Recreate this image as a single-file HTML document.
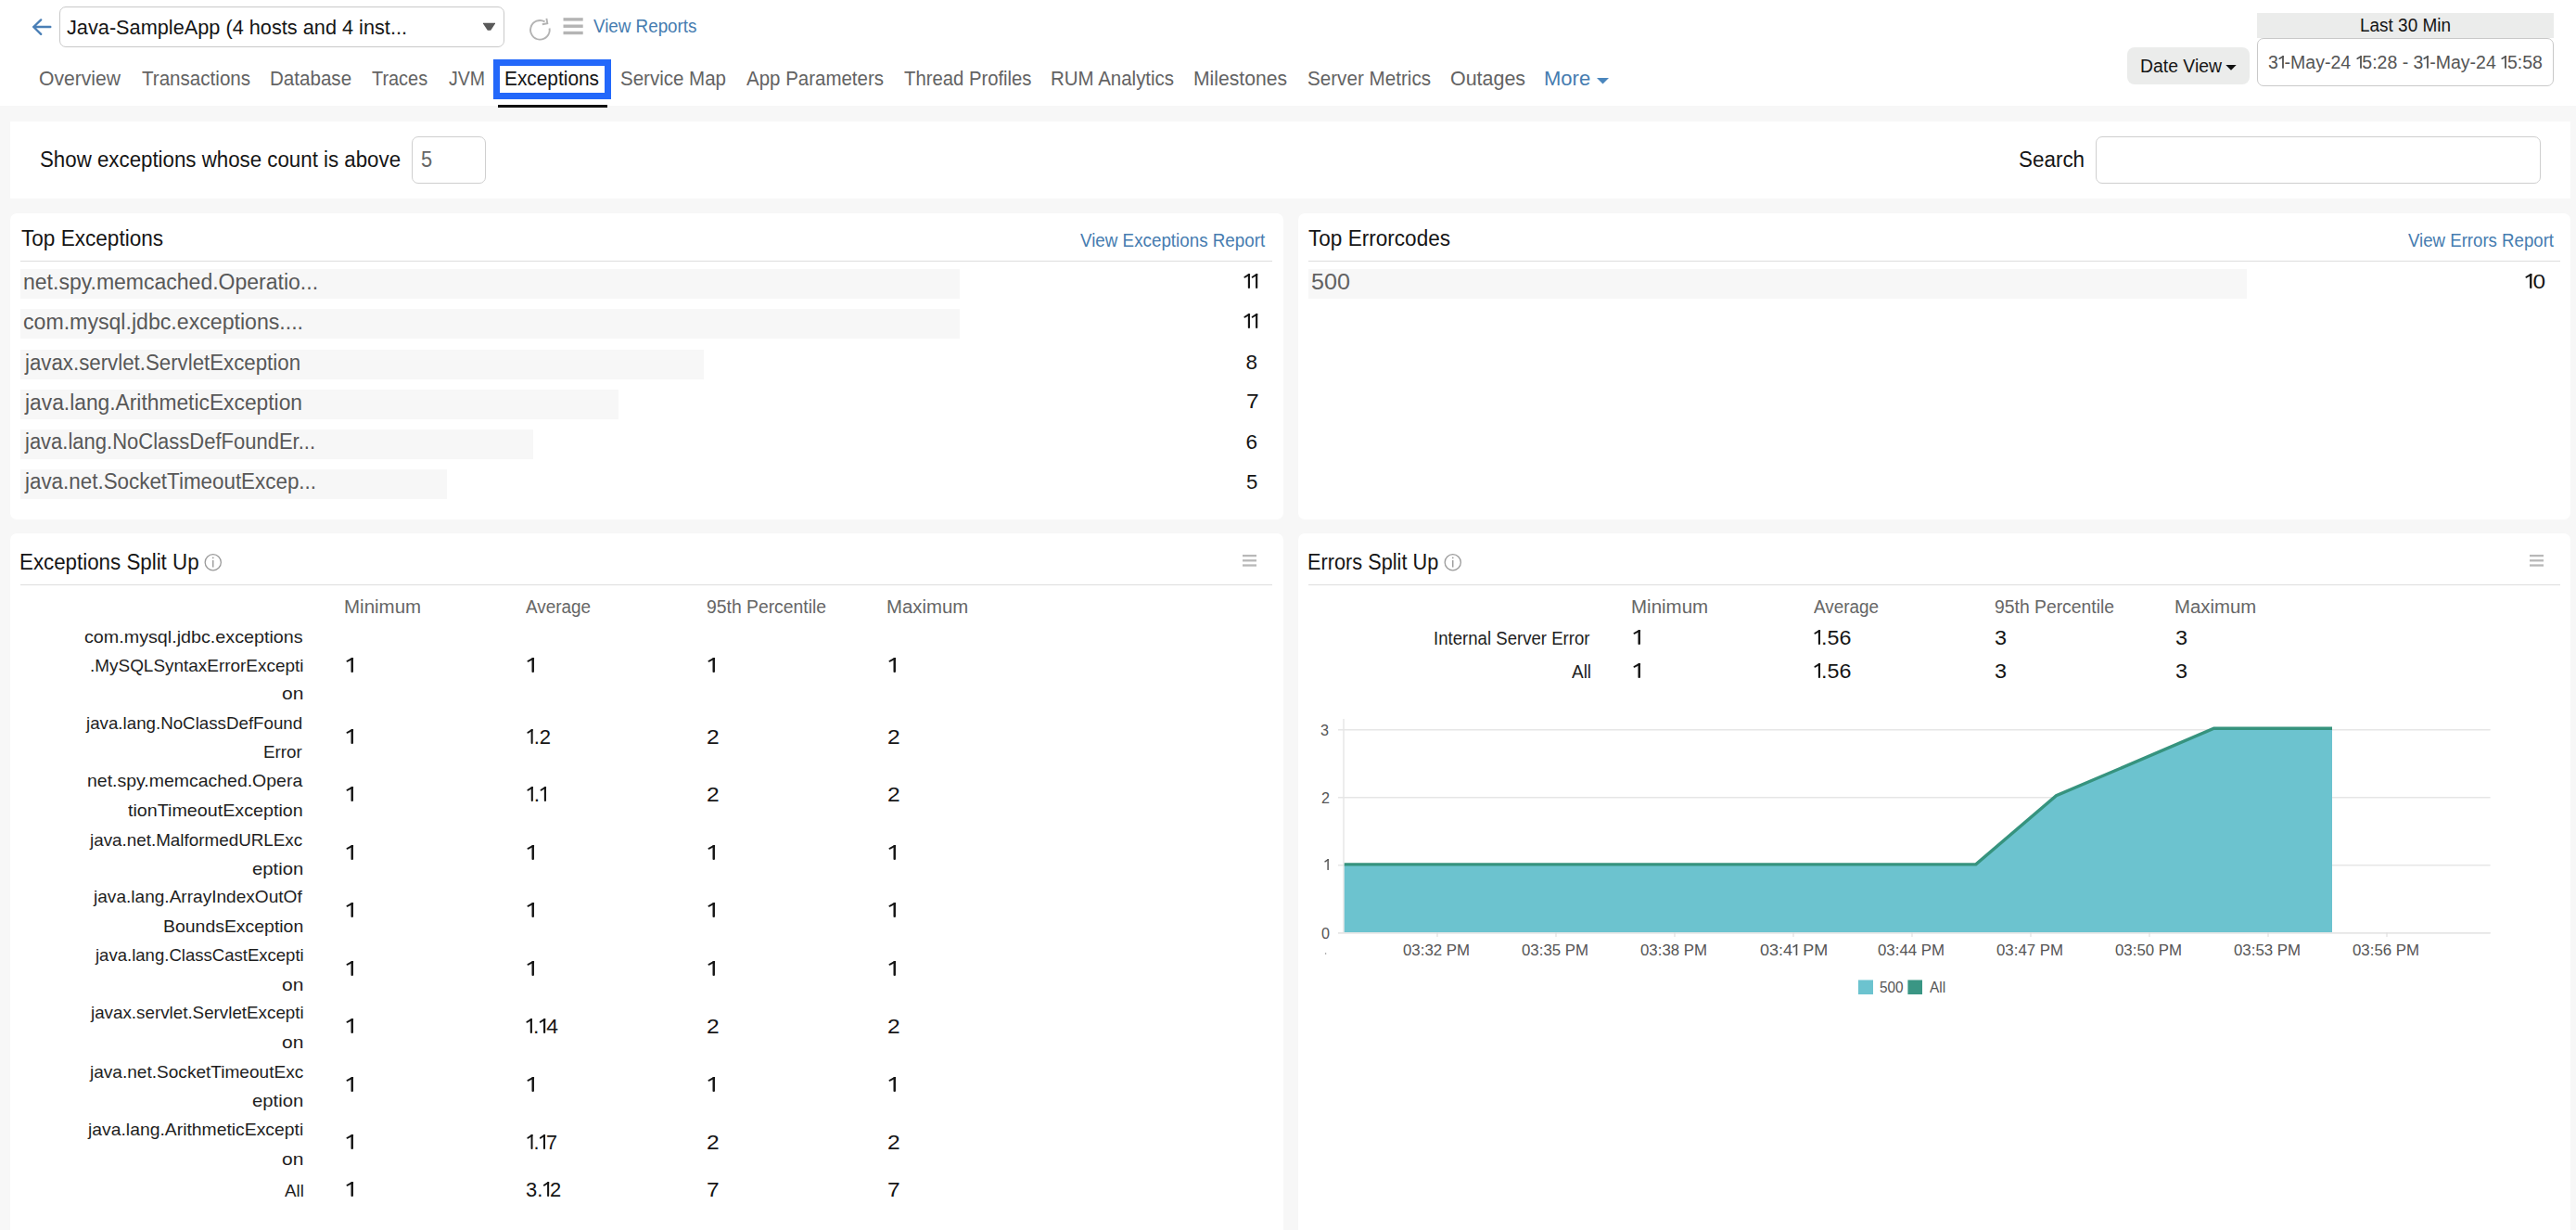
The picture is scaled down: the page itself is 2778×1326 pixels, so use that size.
<!DOCTYPE html>
<html><head><meta charset="utf-8"><title>Exceptions</title>
<style>
html,body{margin:0;padding:0;}
body{width:2778px;height:1326px;position:relative;overflow:hidden;background:#f7f7f7;font-family:"Liberation Sans",sans-serif;}
.t{position:absolute;white-space:pre;line-height:1;transform-origin:0 0;}
.one{position:static;display:inline-block;width:0.347em;height:0.711em;vertical-align:baseline;}
svg{position:absolute;left:0;top:0;}
</style></head><body>
<div style="position:absolute;left:0;top:0;width:2778px;height:114px;background:#fff"></div>
<div style="position:absolute;left:64px;top:7px;width:480px;height:44px;box-sizing:border-box;border:1px solid #c9c9c9;border-radius:7px;background:#fff"></div>
<div style="position:absolute;left:532px;top:64px;width:127px;height:43px;box-sizing:border-box;border:7px solid #2368fa"></div>
<div style="position:absolute;left:537px;top:113px;width:118px;height:3px;background:#111"></div>
<div style="position:absolute;left:2434px;top:14px;width:320px;height:27px;background:#ebeceb"></div>
<div style="position:absolute;left:2434px;top:41px;width:320px;height:52px;box-sizing:border-box;border:1px solid #c9c9c9;border-radius:7px;background:#fff"></div>
<div style="position:absolute;left:2294px;top:51px;width:132px;height:40px;background:#ebeceb;border-radius:8px"></div>
<div style="position:absolute;left:11px;top:131px;width:2761px;height:83px;background:#fff"></div>
<div style="position:absolute;left:444px;top:147px;width:80px;height:51px;box-sizing:border-box;border:1px solid #cfcfcf;border-radius:7px;background:#fff"></div>
<div style="position:absolute;left:2260px;top:147px;width:480px;height:51px;box-sizing:border-box;border:1px solid #cfcfcf;border-radius:7px;background:#fff"></div>
<div style="position:absolute;left:11px;top:230px;width:1373px;height:330px;background:#fff;border-radius:7px"></div>
<div style="position:absolute;left:22px;top:280.5px;width:1350px;height:1px;background:#dedede"></div>
<div style="position:absolute;left:22px;top:290px;width:1013px;height:32px;background:#f7f7f7"></div>
<div style="position:absolute;left:22px;top:333px;width:1013px;height:32px;background:#f7f7f7"></div>
<div style="position:absolute;left:22px;top:377px;width:737px;height:32px;background:#f7f7f7"></div>
<div style="position:absolute;left:22px;top:420px;width:645px;height:32px;background:#f7f7f7"></div>
<div style="position:absolute;left:22px;top:463px;width:553px;height:32px;background:#f7f7f7"></div>
<div style="position:absolute;left:22px;top:506px;width:460px;height:32px;background:#f7f7f7"></div>
<div style="position:absolute;left:1400px;top:230px;width:1372px;height:330px;background:#fff;border-radius:7px"></div>
<div style="position:absolute;left:1411px;top:280.5px;width:1350px;height:1px;background:#dedede"></div>
<div style="position:absolute;left:1411px;top:290px;width:1012px;height:32px;background:#f7f7f7"></div>
<div style="position:absolute;left:11px;top:575px;width:1373px;height:800px;background:#fff;border-radius:7px"></div>
<div style="position:absolute;left:22px;top:630px;width:1350px;height:1px;background:#dedede"></div>
<div style="position:absolute;left:1400px;top:575px;width:1372px;height:800px;background:#fff;border-radius:7px"></div>
<div style="position:absolute;left:1411px;top:630px;width:1350px;height:1px;background:#dedede"></div>
<svg width="2778" height="1326" viewBox="0 0 2778 1326">
<path d="M36.2 29 H54.3 M44.2 21.4 L36.2 29 L44.2 36.8" fill="none" stroke="#4a7fb6" stroke-width="2.4" stroke-linecap="round" stroke-linejoin="round"/>
<path d="M521 24.8 H534 V25.6 L529.2 32.8 H525.8 L521 25.6 Z" fill="#595959"/>
<path d="M592.54 30.51 A10.3 10.3 0 1 1 587.55 23.38" fill="none" stroke="#b3b3b3" stroke-width="1.9"/>
<path d="M584.8 26.3 L590.3 25.2 L589.4 19.8" fill="none" stroke="#b3b3b3" stroke-width="1.9"/>
<line x1="607.5" y1="20.9" x2="628.7" y2="20.9" stroke="#b4b4b4" stroke-width="3.4"/>
<line x1="607.5" y1="28.2" x2="628.7" y2="28.2" stroke="#b4b4b4" stroke-width="3.4"/>
<line x1="607.5" y1="35.5" x2="628.7" y2="35.5" stroke="#b4b4b4" stroke-width="3.4"/>
<path d="M1722 84 H1735 L1728.5 90.5 Z" fill="#4a86bd"/>
<path d="M2400.3 70 H2411.7 L2406 75.8 Z" fill="#111"/>
<circle cx="229.75" cy="606.25" r="8.6" fill="none" stroke="#9a9a9a" stroke-width="1.3"/>
<line x1="229.75" y1="604" x2="229.75" y2="611.5" stroke="#9a9a9a" stroke-width="1.4"/>
<circle cx="229.75" cy="601.3" r="0.9" fill="#9a9a9a"/>
<line x1="1340" y1="599.1" x2="1355" y2="599.1" stroke="#b8b8b8" stroke-width="2.3"/>
<line x1="1340" y1="604.3" x2="1355" y2="604.3" stroke="#b8b8b8" stroke-width="2.3"/>
<line x1="1340" y1="609.5" x2="1355" y2="609.5" stroke="#b8b8b8" stroke-width="2.3"/>
<circle cx="1566.75" cy="606.25" r="8.6" fill="none" stroke="#9a9a9a" stroke-width="1.3"/>
<line x1="1566.75" y1="604" x2="1566.75" y2="611.5" stroke="#9a9a9a" stroke-width="1.4"/>
<circle cx="1566.75" cy="601.3" r="0.9" fill="#9a9a9a"/>
<line x1="2728" y1="599.1" x2="2743" y2="599.1" stroke="#b8b8b8" stroke-width="2.3"/>
<line x1="2728" y1="604.3" x2="2743" y2="604.3" stroke="#b8b8b8" stroke-width="2.3"/>
<line x1="2728" y1="609.5" x2="2743" y2="609.5" stroke="#b8b8b8" stroke-width="2.3"/>
<line x1="1443" y1="786.8" x2="2685.6" y2="786.8" stroke="#e6e6e6" stroke-width="1.4"/>
<line x1="1443" y1="859.8" x2="2685.6" y2="859.8" stroke="#e6e6e6" stroke-width="1.4"/>
<line x1="1443" y1="932.7" x2="2685.6" y2="932.7" stroke="#e6e6e6" stroke-width="1.4"/>
<line x1="1443" y1="1005.8" x2="2685.6" y2="1005.8" stroke="#e6e6e6" stroke-width="1.4"/>
<line x1="1449" y1="775" x2="1449" y2="1005" stroke="#e6e6e6" stroke-width="1.4"/>
<path d="M1449.75 1005.1 L1449.75 932.4 L2130.8 932.4 L2217.5 858.3 L2387.5 785.8 L2515 785.8 L2515 1005.1 Z" fill="#6cc3cf"/>
<line x1="1443" y1="1005.8" x2="2685.6" y2="1005.8" stroke="#e6e6e6" stroke-width="1.4"/>
<path d="M1449.75 931.9 L2130.8 931.9 L2217.5 857.8 L2387.5 785.3 L2515 785.3" fill="none" stroke="#36937e" stroke-width="3.4"/>
<line x1="1550" y1="1005" x2="1550" y2="1010" stroke="#e0e0e0" stroke-width="1.2"/>
<line x1="1678" y1="1005" x2="1678" y2="1010" stroke="#e0e0e0" stroke-width="1.2"/>
<line x1="1806" y1="1005" x2="1806" y2="1010" stroke="#e0e0e0" stroke-width="1.2"/>
<line x1="1934" y1="1005" x2="1934" y2="1010" stroke="#e0e0e0" stroke-width="1.2"/>
<line x1="2062" y1="1005" x2="2062" y2="1010" stroke="#e0e0e0" stroke-width="1.2"/>
<line x1="2190" y1="1005" x2="2190" y2="1010" stroke="#e0e0e0" stroke-width="1.2"/>
<line x1="2318" y1="1005" x2="2318" y2="1010" stroke="#e0e0e0" stroke-width="1.2"/>
<line x1="2446" y1="1005" x2="2446" y2="1010" stroke="#e0e0e0" stroke-width="1.2"/>
<line x1="2574" y1="1005" x2="2574" y2="1010" stroke="#e0e0e0" stroke-width="1.2"/>
<circle cx="1429.6" cy="1028" r="0.8" fill="#888"/>
<rect x="2004" y="1056.5" width="16" height="15.5" fill="#6cc3cf"/>
<rect x="2057.4" y="1056.5" width="15.6" height="15.5" fill="#3a9684"/>
</svg>
<div class="t" id="t0" style="left:72.00px;top:19.38px;font-size:22.5px;color:#151515;transform:scaleX(0.9653);">Java-SampleApp (4 hosts and 4 inst...</div>
<div class="t" id="t1" style="left:640.21px;top:19.32px;font-size:19.5px;color:#467cb0;transform:scaleX(0.9637);">View Reports</div>
<div class="t" id="t2" style="left:41.98px;top:73.78px;font-size:22.5px;color:#636363;transform:scaleX(0.9386);">Overview</div>
<div class="t" id="t3" style="left:153.00px;top:73.78px;font-size:22.5px;color:#636363;transform:scaleX(0.9148);">Transactions</div>
<div class="t" id="t4" style="left:290.91px;top:73.78px;font-size:22.5px;color:#636363;transform:scaleX(0.9146);">Database</div>
<div class="t" id="t5" style="left:401.00px;top:73.78px;font-size:22.5px;color:#636363;transform:scaleX(0.8845);">Traces</div>
<div class="t" id="t6" style="left:484.00px;top:73.78px;font-size:22.5px;color:#636363;transform:scaleX(0.8673);">JVM</div>
<div class="t" id="t7" style="left:544.49px;top:73.78px;font-size:22.5px;color:#151515;transform:scaleX(0.9269);">Exceptions</div>
<div class="t" id="t8" style="left:668.99px;top:73.78px;font-size:22.5px;color:#636363;transform:scaleX(0.9119);">Service Map</div>
<div class="t" id="t9" style="left:805.00px;top:73.78px;font-size:22.5px;color:#636363;transform:scaleX(0.9104);">App Parameters</div>
<div class="t" id="t10" style="left:975.00px;top:73.78px;font-size:22.5px;color:#636363;transform:scaleX(0.9013);">Thread Profiles</div>
<div class="t" id="t11" style="left:1132.97px;top:73.78px;font-size:22.5px;color:#636363;transform:scaleX(0.9097);">RUM Analytics</div>
<div class="t" id="t12" style="left:1286.96px;top:73.78px;font-size:22.5px;color:#636363;transform:scaleX(0.9395);">Milestones</div>
<div class="t" id="t13" style="left:1409.99px;top:73.78px;font-size:22.5px;color:#636363;transform:scaleX(0.9173);">Server Metrics</div>
<div class="t" id="t14" style="left:1563.97px;top:73.78px;font-size:22.5px;color:#636363;transform:scaleX(0.9529);">Outages</div>
<div class="t" id="t15" style="left:1664.86px;top:73.78px;font-size:22.5px;color:#467cb0;transform:scaleX(0.9794);">More</div>
<div class="t" id="t16" style="left:2544.98px;top:18.07px;font-size:19.5px;color:#151515;transform:scaleX(0.9726);">Last 30 Min</div>
<div class="t" id="t17" style="left:2445.99px;top:58.07px;font-size:19.5px;color:#555;">3<svg class="one" viewBox="0 0 78 160" preserveAspectRatio="none"><path d="M47 2 H68 V152 Q68 160 57.5 160 Q47 160 47 152 Z" fill="currentColor"/><path d="M60 9 L14 37" stroke="currentColor" stroke-width="19" stroke-linecap="round" fill="none"/></svg>-May-24 <svg class="one" viewBox="0 0 78 160" preserveAspectRatio="none"><path d="M47 2 H68 V152 Q68 160 57.5 160 Q47 160 47 152 Z" fill="currentColor"/><path d="M60 9 L14 37" stroke="currentColor" stroke-width="19" stroke-linecap="round" fill="none"/></svg>5:28 - 3<svg class="one" viewBox="0 0 78 160" preserveAspectRatio="none"><path d="M47 2 H68 V152 Q68 160 57.5 160 Q47 160 47 152 Z" fill="currentColor"/><path d="M60 9 L14 37" stroke="currentColor" stroke-width="19" stroke-linecap="round" fill="none"/></svg>-May-24 <svg class="one" viewBox="0 0 78 160" preserveAspectRatio="none"><path d="M47 2 H68 V152 Q68 160 57.5 160 Q47 160 47 152 Z" fill="currentColor"/><path d="M60 9 L14 37" stroke="currentColor" stroke-width="19" stroke-linecap="round" fill="none"/></svg>5:58</div>
<div class="t" id="t18" style="left:2307.99px;top:61.82px;font-size:19.5px;color:#151515;transform:scaleX(0.9942);">Date View</div>
<div class="t" id="t19" style="left:42.59px;top:160.73px;font-size:23.5px;color:#151515;transform:scaleX(0.9484);">Show exceptions whose count is above</div>
<div class="t" id="t20" style="left:454.00px;top:161.35px;font-size:23px;color:#666;transform:scaleX(0.9500);">5</div>
<div class="t" id="t21" style="left:2176.97px;top:160.93px;font-size:23.5px;color:#151515;transform:scaleX(0.9544);">Search</div>
<div class="t" id="t22" style="left:23.00px;top:246.35px;font-size:23px;color:#151515;transform:scaleX(0.9812);">Top Exceptions</div>
<div class="t" id="t23" style="left:1164.80px;top:248.90px;font-size:20px;color:#467cb0;transform:scaleX(0.9398);">View Exceptions Report</div>
<div class="t" id="t24" style="left:24.99px;top:292.92px;font-size:23.5px;color:#585858;transform:scaleX(0.9792);">net.spy.memcached.Operatio...</div>
<div class="t" id="t25" style="left:1341.00px;top:292.77px;font-size:22.5px;color:#151515;transform:scaleX(1.0289);"><svg class="one" viewBox="0 0 78 160" preserveAspectRatio="none"><path d="M47 2 H68 V152 Q68 160 57.5 160 Q47 160 47 152 Z" fill="currentColor"/><path d="M60 9 L14 37" stroke="currentColor" stroke-width="19" stroke-linecap="round" fill="none"/></svg><svg class="one" viewBox="0 0 78 160" preserveAspectRatio="none"><path d="M47 2 H68 V152 Q68 160 57.5 160 Q47 160 47 152 Z" fill="currentColor"/><path d="M60 9 L14 37" stroke="currentColor" stroke-width="19" stroke-linecap="round" fill="none"/></svg></div>
<div class="t" id="t26" style="left:24.99px;top:335.92px;font-size:23.5px;color:#585858;transform:scaleX(0.9841);">com.mysql.jdbc.exceptions....</div>
<div class="t" id="t27" style="left:1341.00px;top:335.52px;font-size:22.5px;color:#151515;transform:scaleX(1.0289);"><svg class="one" viewBox="0 0 78 160" preserveAspectRatio="none"><path d="M47 2 H68 V152 Q68 160 57.5 160 Q47 160 47 152 Z" fill="currentColor"/><path d="M60 9 L14 37" stroke="currentColor" stroke-width="19" stroke-linecap="round" fill="none"/></svg><svg class="one" viewBox="0 0 78 160" preserveAspectRatio="none"><path d="M47 2 H68 V152 Q68 160 57.5 160 Q47 160 47 152 Z" fill="currentColor"/><path d="M60 9 L14 37" stroke="currentColor" stroke-width="19" stroke-linecap="round" fill="none"/></svg></div>
<div class="t" id="t28" style="left:27.00px;top:379.67px;font-size:23.5px;color:#585858;transform:scaleX(0.9475);">javax.servlet.ServletException</div>
<div class="t" id="t29" style="left:1343.62px;top:379.67px;font-size:22.5px;color:#151515;">8</div>
<div class="t" id="t30" style="left:27.00px;top:422.92px;font-size:23.5px;color:#585858;transform:scaleX(0.9700);">java.lang.ArithmeticException</div>
<div class="t" id="t31" style="left:1343.52px;top:422.27px;font-size:22.5px;color:#151515;transform:scaleX(1.0924);">7</div>
<div class="t" id="t32" style="left:27.00px;top:465.42px;font-size:23.5px;color:#585858;transform:scaleX(0.9360);">java.lang.NoClassDefFoundEr...</div>
<div class="t" id="t33" style="left:1343.62px;top:465.77px;font-size:22.5px;color:#151515;">6</div>
<div class="t" id="t34" style="left:27.00px;top:508.42px;font-size:23.5px;color:#585858;transform:scaleX(0.9527);">java.net.SocketTimeoutExcep...</div>
<div class="t" id="t35" style="left:1343.88px;top:508.57px;font-size:22.5px;color:#151515;transform:scaleX(0.9849);">5</div>
<div class="t" id="t36" style="left:1411.00px;top:246.35px;font-size:23px;color:#151515;transform:scaleX(0.9813);">Top Errorcodes</div>
<div class="t" id="t37" style="left:2597.00px;top:248.90px;font-size:20px;color:#467cb0;transform:scaleX(0.9314);">View Errors Report</div>
<div class="t" id="t38" style="left:1414.03px;top:292.92px;font-size:23.5px;color:#626262;transform:scaleX(1.0714);">500</div>
<div class="t" id="t39" style="left:2723.02px;top:292.77px;font-size:22.5px;color:#151515;transform:scaleX(1.0844);"><svg class="one" viewBox="0 0 78 160" preserveAspectRatio="none"><path d="M47 2 H68 V152 Q68 160 57.5 160 Q47 160 47 152 Z" fill="currentColor"/><path d="M60 9 L14 37" stroke="currentColor" stroke-width="19" stroke-linecap="round" fill="none"/></svg>0</div>
<div class="t" id="t40" style="left:20.97px;top:595.35px;font-size:23px;color:#151515;transform:scaleX(0.9705);">Exceptions Split Up</div>
<div class="t" id="t41" style="left:370.90px;top:645.32px;font-size:19.5px;color:#666;transform:scaleX(1.0510);">Minimum</div>
<div class="t" id="t42" style="left:567.02px;top:645.32px;font-size:19.5px;color:#666;transform:scaleX(0.9688);">Average</div>
<div class="t" id="t43" style="left:761.97px;top:645.32px;font-size:19.5px;color:#666;transform:scaleX(0.9919);">95th Percentile</div>
<div class="t" id="t44" style="left:955.91px;top:645.32px;font-size:19.5px;color:#666;transform:scaleX(1.0434);">Maximum</div>
<div class="t" id="t45" style="left:90.59px;top:676.75px;font-size:19px;color:#1e1e1e;transform:scaleX(1.0378);">com.mysql.jdbc.exceptions</div>
<div class="t" id="t46" style="left:96.78px;top:707.55px;font-size:19px;color:#1e1e1e;transform:scaleX(0.9965);">.MySQLSyntaxErrorExcepti</div>
<div class="t" id="t47" style="left:303.90px;top:738.45px;font-size:19px;color:#1e1e1e;transform:scaleX(1.1068);">on</div>
<div class="t" id="t48" style="left:93.00px;top:770.25px;font-size:19px;color:#1e1e1e;transform:scaleX(0.9857);">java.lang.NoClassDefFound</div>
<div class="t" id="t49" style="left:284.47px;top:801.25px;font-size:19px;color:#1e1e1e;transform:scaleX(0.9890);">Error</div>
<div class="t" id="t50" style="left:94.00px;top:832.25px;font-size:19px;color:#1e1e1e;transform:scaleX(1.0243);">net.spy.memcached.Opera</div>
<div class="t" id="t51" style="left:138.49px;top:864.25px;font-size:19px;color:#1e1e1e;transform:scaleX(1.0368);">tionTimeoutException</div>
<div class="t" id="t52" style="left:97.00px;top:895.50px;font-size:19px;color:#1e1e1e;transform:scaleX(0.9911);">java.net.MalformedURLExc</div>
<div class="t" id="t53" style="left:271.95px;top:926.50px;font-size:19px;color:#1e1e1e;transform:scaleX(1.0676);">eption</div>
<div class="t" id="t54" style="left:101.49px;top:957.25px;font-size:19px;color:#1e1e1e;transform:scaleX(1.0037);">java.lang.ArrayIndexOutOf</div>
<div class="t" id="t55" style="left:175.99px;top:988.75px;font-size:19px;color:#1e1e1e;transform:scaleX(1.0226);">BoundsException</div>
<div class="t" id="t56" style="left:102.50px;top:1020.25px;font-size:19px;color:#1e1e1e;transform:scaleX(0.9760);">java.lang.ClassCastExcepti</div>
<div class="t" id="t57" style="left:303.90px;top:1051.75px;font-size:19px;color:#1e1e1e;transform:scaleX(1.1068);">on</div>
<div class="t" id="t58" style="left:97.50px;top:1082.25px;font-size:19px;color:#1e1e1e;transform:scaleX(0.9887);">javax.servlet.ServletExcepti</div>
<div class="t" id="t59" style="left:303.90px;top:1114.25px;font-size:19px;color:#1e1e1e;transform:scaleX(1.1068);">on</div>
<div class="t" id="t60" style="left:97.00px;top:1145.50px;font-size:19px;color:#1e1e1e;transform:scaleX(1.0030);">java.net.SocketTimeoutExc</div>
<div class="t" id="t61" style="left:271.95px;top:1176.75px;font-size:19px;color:#1e1e1e;transform:scaleX(1.0676);">eption</div>
<div class="t" id="t62" style="left:95.00px;top:1207.75px;font-size:19px;color:#1e1e1e;transform:scaleX(1.0180);">java.lang.ArithmeticExcepti</div>
<div class="t" id="t63" style="left:303.90px;top:1239.75px;font-size:19px;color:#1e1e1e;transform:scaleX(1.1068);">on</div>
<div class="t" id="t64" style="left:306.51px;top:1273.50px;font-size:19px;color:#1e1e1e;transform:scaleX(0.9858);">All</div>
<div class="t" id="t65" style="left:372.93px;top:706.77px;font-size:22.5px;color:#151515;transform:scaleX(1.1710);"><svg class="one" viewBox="0 0 78 160" preserveAspectRatio="none"><path d="M47 2 H68 V152 Q68 160 57.5 160 Q47 160 47 152 Z" fill="currentColor"/><path d="M60 9 L14 37" stroke="currentColor" stroke-width="19" stroke-linecap="round" fill="none"/></svg></div>
<div class="t" id="t66" style="left:567.93px;top:706.77px;font-size:22.5px;color:#151515;transform:scaleX(1.1710);"><svg class="one" viewBox="0 0 78 160" preserveAspectRatio="none"><path d="M47 2 H68 V152 Q68 160 57.5 160 Q47 160 47 152 Z" fill="currentColor"/><path d="M60 9 L14 37" stroke="currentColor" stroke-width="19" stroke-linecap="round" fill="none"/></svg></div>
<div class="t" id="t67" style="left:762.93px;top:706.77px;font-size:22.5px;color:#151515;transform:scaleX(1.1710);"><svg class="one" viewBox="0 0 78 160" preserveAspectRatio="none"><path d="M47 2 H68 V152 Q68 160 57.5 160 Q47 160 47 152 Z" fill="currentColor"/><path d="M60 9 L14 37" stroke="currentColor" stroke-width="19" stroke-linecap="round" fill="none"/></svg></div>
<div class="t" id="t68" style="left:958.00px;top:706.77px;font-size:22.5px;color:#151515;transform:scaleX(1.1710);"><svg class="one" viewBox="0 0 78 160" preserveAspectRatio="none"><path d="M47 2 H68 V152 Q68 160 57.5 160 Q47 160 47 152 Z" fill="currentColor"/><path d="M60 9 L14 37" stroke="currentColor" stroke-width="19" stroke-linecap="round" fill="none"/></svg></div>
<div class="t" id="t69" style="left:372.93px;top:784.27px;font-size:22.5px;color:#151515;transform:scaleX(1.1710);"><svg class="one" viewBox="0 0 78 160" preserveAspectRatio="none"><path d="M47 2 H68 V152 Q68 160 57.5 160 Q47 160 47 152 Z" fill="currentColor"/><path d="M60 9 L14 37" stroke="currentColor" stroke-width="19" stroke-linecap="round" fill="none"/></svg></div>
<div class="t" id="t70" style="left:567.98px;top:784.27px;font-size:22.5px;color:#151515;transform:scaleX(0.9800);"><svg class="one" viewBox="0 0 78 160" preserveAspectRatio="none"><path d="M47 2 H68 V152 Q68 160 57.5 160 Q47 160 47 152 Z" fill="currentColor"/><path d="M60 9 L14 37" stroke="currentColor" stroke-width="19" stroke-linecap="round" fill="none"/></svg>.2</div>
<div class="t" id="t71" style="left:761.82px;top:784.27px;font-size:22.5px;color:#151515;transform:scaleX(1.0924);">2</div>
<div class="t" id="t72" style="left:956.79px;top:784.27px;font-size:22.5px;color:#151515;transform:scaleX(1.0924);">2</div>
<div class="t" id="t73" style="left:372.93px;top:845.77px;font-size:22.5px;color:#151515;transform:scaleX(1.1710);"><svg class="one" viewBox="0 0 78 160" preserveAspectRatio="none"><path d="M47 2 H68 V152 Q68 160 57.5 160 Q47 160 47 152 Z" fill="currentColor"/><path d="M60 9 L14 37" stroke="currentColor" stroke-width="19" stroke-linecap="round" fill="none"/></svg></div>
<div class="t" id="t74" style="left:567.98px;top:845.77px;font-size:22.5px;color:#151515;transform:scaleX(1.0084);"><svg class="one" viewBox="0 0 78 160" preserveAspectRatio="none"><path d="M47 2 H68 V152 Q68 160 57.5 160 Q47 160 47 152 Z" fill="currentColor"/><path d="M60 9 L14 37" stroke="currentColor" stroke-width="19" stroke-linecap="round" fill="none"/></svg>.<svg class="one" viewBox="0 0 78 160" preserveAspectRatio="none"><path d="M47 2 H68 V152 Q68 160 57.5 160 Q47 160 47 152 Z" fill="currentColor"/><path d="M60 9 L14 37" stroke="currentColor" stroke-width="19" stroke-linecap="round" fill="none"/></svg></div>
<div class="t" id="t75" style="left:761.82px;top:845.77px;font-size:22.5px;color:#151515;transform:scaleX(1.0924);">2</div>
<div class="t" id="t76" style="left:956.79px;top:845.77px;font-size:22.5px;color:#151515;transform:scaleX(1.0924);">2</div>
<div class="t" id="t77" style="left:372.93px;top:908.77px;font-size:22.5px;color:#151515;transform:scaleX(1.1710);"><svg class="one" viewBox="0 0 78 160" preserveAspectRatio="none"><path d="M47 2 H68 V152 Q68 160 57.5 160 Q47 160 47 152 Z" fill="currentColor"/><path d="M60 9 L14 37" stroke="currentColor" stroke-width="19" stroke-linecap="round" fill="none"/></svg></div>
<div class="t" id="t78" style="left:567.93px;top:908.77px;font-size:22.5px;color:#151515;transform:scaleX(1.1710);"><svg class="one" viewBox="0 0 78 160" preserveAspectRatio="none"><path d="M47 2 H68 V152 Q68 160 57.5 160 Q47 160 47 152 Z" fill="currentColor"/><path d="M60 9 L14 37" stroke="currentColor" stroke-width="19" stroke-linecap="round" fill="none"/></svg></div>
<div class="t" id="t79" style="left:762.93px;top:908.77px;font-size:22.5px;color:#151515;transform:scaleX(1.1710);"><svg class="one" viewBox="0 0 78 160" preserveAspectRatio="none"><path d="M47 2 H68 V152 Q68 160 57.5 160 Q47 160 47 152 Z" fill="currentColor"/><path d="M60 9 L14 37" stroke="currentColor" stroke-width="19" stroke-linecap="round" fill="none"/></svg></div>
<div class="t" id="t80" style="left:958.00px;top:908.77px;font-size:22.5px;color:#151515;transform:scaleX(1.1710);"><svg class="one" viewBox="0 0 78 160" preserveAspectRatio="none"><path d="M47 2 H68 V152 Q68 160 57.5 160 Q47 160 47 152 Z" fill="currentColor"/><path d="M60 9 L14 37" stroke="currentColor" stroke-width="19" stroke-linecap="round" fill="none"/></svg></div>
<div class="t" id="t81" style="left:372.93px;top:970.77px;font-size:22.5px;color:#151515;transform:scaleX(1.1710);"><svg class="one" viewBox="0 0 78 160" preserveAspectRatio="none"><path d="M47 2 H68 V152 Q68 160 57.5 160 Q47 160 47 152 Z" fill="currentColor"/><path d="M60 9 L14 37" stroke="currentColor" stroke-width="19" stroke-linecap="round" fill="none"/></svg></div>
<div class="t" id="t82" style="left:567.93px;top:970.77px;font-size:22.5px;color:#151515;transform:scaleX(1.1710);"><svg class="one" viewBox="0 0 78 160" preserveAspectRatio="none"><path d="M47 2 H68 V152 Q68 160 57.5 160 Q47 160 47 152 Z" fill="currentColor"/><path d="M60 9 L14 37" stroke="currentColor" stroke-width="19" stroke-linecap="round" fill="none"/></svg></div>
<div class="t" id="t83" style="left:762.93px;top:970.77px;font-size:22.5px;color:#151515;transform:scaleX(1.1710);"><svg class="one" viewBox="0 0 78 160" preserveAspectRatio="none"><path d="M47 2 H68 V152 Q68 160 57.5 160 Q47 160 47 152 Z" fill="currentColor"/><path d="M60 9 L14 37" stroke="currentColor" stroke-width="19" stroke-linecap="round" fill="none"/></svg></div>
<div class="t" id="t84" style="left:958.00px;top:970.77px;font-size:22.5px;color:#151515;transform:scaleX(1.1710);"><svg class="one" viewBox="0 0 78 160" preserveAspectRatio="none"><path d="M47 2 H68 V152 Q68 160 57.5 160 Q47 160 47 152 Z" fill="currentColor"/><path d="M60 9 L14 37" stroke="currentColor" stroke-width="19" stroke-linecap="round" fill="none"/></svg></div>
<div class="t" id="t85" style="left:372.93px;top:1033.78px;font-size:22.5px;color:#151515;transform:scaleX(1.1710);"><svg class="one" viewBox="0 0 78 160" preserveAspectRatio="none"><path d="M47 2 H68 V152 Q68 160 57.5 160 Q47 160 47 152 Z" fill="currentColor"/><path d="M60 9 L14 37" stroke="currentColor" stroke-width="19" stroke-linecap="round" fill="none"/></svg></div>
<div class="t" id="t86" style="left:567.93px;top:1033.78px;font-size:22.5px;color:#151515;transform:scaleX(1.1710);"><svg class="one" viewBox="0 0 78 160" preserveAspectRatio="none"><path d="M47 2 H68 V152 Q68 160 57.5 160 Q47 160 47 152 Z" fill="currentColor"/><path d="M60 9 L14 37" stroke="currentColor" stroke-width="19" stroke-linecap="round" fill="none"/></svg></div>
<div class="t" id="t87" style="left:762.93px;top:1033.78px;font-size:22.5px;color:#151515;transform:scaleX(1.1710);"><svg class="one" viewBox="0 0 78 160" preserveAspectRatio="none"><path d="M47 2 H68 V152 Q68 160 57.5 160 Q47 160 47 152 Z" fill="currentColor"/><path d="M60 9 L14 37" stroke="currentColor" stroke-width="19" stroke-linecap="round" fill="none"/></svg></div>
<div class="t" id="t88" style="left:958.00px;top:1033.78px;font-size:22.5px;color:#151515;transform:scaleX(1.1710);"><svg class="one" viewBox="0 0 78 160" preserveAspectRatio="none"><path d="M47 2 H68 V152 Q68 160 57.5 160 Q47 160 47 152 Z" fill="currentColor"/><path d="M60 9 L14 37" stroke="currentColor" stroke-width="19" stroke-linecap="round" fill="none"/></svg></div>
<div class="t" id="t89" style="left:372.93px;top:1095.78px;font-size:22.5px;color:#151515;transform:scaleX(1.1710);"><svg class="one" viewBox="0 0 78 160" preserveAspectRatio="none"><path d="M47 2 H68 V152 Q68 160 57.5 160 Q47 160 47 152 Z" fill="currentColor"/><path d="M60 9 L14 37" stroke="currentColor" stroke-width="19" stroke-linecap="round" fill="none"/></svg></div>
<div class="t" id="t90" style="left:566.99px;top:1095.78px;font-size:22.5px;color:#151515;transform:scaleX(1.0187);"><svg class="one" viewBox="0 0 78 160" preserveAspectRatio="none"><path d="M47 2 H68 V152 Q68 160 57.5 160 Q47 160 47 152 Z" fill="currentColor"/><path d="M60 9 L14 37" stroke="currentColor" stroke-width="19" stroke-linecap="round" fill="none"/></svg>.<svg class="one" viewBox="0 0 78 160" preserveAspectRatio="none"><path d="M47 2 H68 V152 Q68 160 57.5 160 Q47 160 47 152 Z" fill="currentColor"/><path d="M60 9 L14 37" stroke="currentColor" stroke-width="19" stroke-linecap="round" fill="none"/></svg>4</div>
<div class="t" id="t91" style="left:761.82px;top:1095.78px;font-size:22.5px;color:#151515;transform:scaleX(1.0924);">2</div>
<div class="t" id="t92" style="left:956.79px;top:1095.78px;font-size:22.5px;color:#151515;transform:scaleX(1.0924);">2</div>
<div class="t" id="t93" style="left:372.93px;top:1159.28px;font-size:22.5px;color:#151515;transform:scaleX(1.1710);"><svg class="one" viewBox="0 0 78 160" preserveAspectRatio="none"><path d="M47 2 H68 V152 Q68 160 57.5 160 Q47 160 47 152 Z" fill="currentColor"/><path d="M60 9 L14 37" stroke="currentColor" stroke-width="19" stroke-linecap="round" fill="none"/></svg></div>
<div class="t" id="t94" style="left:567.93px;top:1159.28px;font-size:22.5px;color:#151515;transform:scaleX(1.1710);"><svg class="one" viewBox="0 0 78 160" preserveAspectRatio="none"><path d="M47 2 H68 V152 Q68 160 57.5 160 Q47 160 47 152 Z" fill="currentColor"/><path d="M60 9 L14 37" stroke="currentColor" stroke-width="19" stroke-linecap="round" fill="none"/></svg></div>
<div class="t" id="t95" style="left:762.93px;top:1159.28px;font-size:22.5px;color:#151515;transform:scaleX(1.1710);"><svg class="one" viewBox="0 0 78 160" preserveAspectRatio="none"><path d="M47 2 H68 V152 Q68 160 57.5 160 Q47 160 47 152 Z" fill="currentColor"/><path d="M60 9 L14 37" stroke="currentColor" stroke-width="19" stroke-linecap="round" fill="none"/></svg></div>
<div class="t" id="t96" style="left:958.00px;top:1159.28px;font-size:22.5px;color:#151515;transform:scaleX(1.1710);"><svg class="one" viewBox="0 0 78 160" preserveAspectRatio="none"><path d="M47 2 H68 V152 Q68 160 57.5 160 Q47 160 47 152 Z" fill="currentColor"/><path d="M60 9 L14 37" stroke="currentColor" stroke-width="19" stroke-linecap="round" fill="none"/></svg></div>
<div class="t" id="t97" style="left:372.93px;top:1220.78px;font-size:22.5px;color:#151515;transform:scaleX(1.1710);"><svg class="one" viewBox="0 0 78 160" preserveAspectRatio="none"><path d="M47 2 H68 V152 Q68 160 57.5 160 Q47 160 47 152 Z" fill="currentColor"/><path d="M60 9 L14 37" stroke="currentColor" stroke-width="19" stroke-linecap="round" fill="none"/></svg></div>
<div class="t" id="t98" style="left:567.98px;top:1220.78px;font-size:22.5px;color:#151515;transform:scaleX(0.9608);"><svg class="one" viewBox="0 0 78 160" preserveAspectRatio="none"><path d="M47 2 H68 V152 Q68 160 57.5 160 Q47 160 47 152 Z" fill="currentColor"/><path d="M60 9 L14 37" stroke="currentColor" stroke-width="19" stroke-linecap="round" fill="none"/></svg>.<svg class="one" viewBox="0 0 78 160" preserveAspectRatio="none"><path d="M47 2 H68 V152 Q68 160 57.5 160 Q47 160 47 152 Z" fill="currentColor"/><path d="M60 9 L14 37" stroke="currentColor" stroke-width="19" stroke-linecap="round" fill="none"/></svg>7</div>
<div class="t" id="t99" style="left:761.82px;top:1220.78px;font-size:22.5px;color:#151515;transform:scaleX(1.0924);">2</div>
<div class="t" id="t100" style="left:956.79px;top:1220.78px;font-size:22.5px;color:#151515;transform:scaleX(1.0924);">2</div>
<div class="t" id="t101" style="left:372.93px;top:1271.78px;font-size:22.5px;color:#151515;transform:scaleX(1.1710);"><svg class="one" viewBox="0 0 78 160" preserveAspectRatio="none"><path d="M47 2 H68 V152 Q68 160 57.5 160 Q47 160 47 152 Z" fill="currentColor"/><path d="M60 9 L14 37" stroke="currentColor" stroke-width="19" stroke-linecap="round" fill="none"/></svg></div>
<div class="t" id="t102" style="left:566.91px;top:1271.78px;font-size:22.5px;color:#151515;transform:scaleX(0.9744);">3.<svg class="one" viewBox="0 0 78 160" preserveAspectRatio="none"><path d="M47 2 H68 V152 Q68 160 57.5 160 Q47 160 47 152 Z" fill="currentColor"/><path d="M60 9 L14 37" stroke="currentColor" stroke-width="19" stroke-linecap="round" fill="none"/></svg>2</div>
<div class="t" id="t103" style="left:761.82px;top:1271.78px;font-size:22.5px;color:#151515;transform:scaleX(1.0924);">7</div>
<div class="t" id="t104" style="left:956.79px;top:1271.78px;font-size:22.5px;color:#151515;transform:scaleX(1.0924);">7</div>
<div class="t" id="t105" style="left:1409.77px;top:595.35px;font-size:23px;color:#151515;transform:scaleX(0.9446);">Errors Split Up</div>
<div class="t" id="t106" style="left:1758.90px;top:645.32px;font-size:19.5px;color:#666;transform:scaleX(1.0510);">Minimum</div>
<div class="t" id="t107" style="left:1956.00px;top:645.32px;font-size:19.5px;color:#666;transform:scaleX(0.9688);">Average</div>
<div class="t" id="t108" style="left:2150.97px;top:645.32px;font-size:19.5px;color:#666;transform:scaleX(0.9919);">95th Percentile</div>
<div class="t" id="t109" style="left:2344.91px;top:645.32px;font-size:19.5px;color:#666;transform:scaleX(1.0434);">Maximum</div>
<div class="t" id="t110" style="left:1546.49px;top:678.48px;font-size:20.5px;color:#1e1e1e;transform:scaleX(0.9075);">Internal Server Error</div>
<div class="t" id="t111" style="left:1695.00px;top:714.48px;font-size:20.5px;color:#1e1e1e;transform:scaleX(0.9241);">All</div>
<div class="t" id="t112" style="left:1760.93px;top:677.48px;font-size:22.5px;color:#151515;transform:scaleX(1.1710);"><svg class="one" viewBox="0 0 78 160" preserveAspectRatio="none"><path d="M47 2 H68 V152 Q68 160 57.5 160 Q47 160 47 152 Z" fill="currentColor"/><path d="M60 9 L14 37" stroke="currentColor" stroke-width="19" stroke-linecap="round" fill="none"/></svg></div>
<div class="t" id="t113" style="left:1956.00px;top:677.48px;font-size:22.5px;color:#151515;transform:scaleX(1.0344);"><svg class="one" viewBox="0 0 78 160" preserveAspectRatio="none"><path d="M47 2 H68 V152 Q68 160 57.5 160 Q47 160 47 152 Z" fill="currentColor"/><path d="M60 9 L14 37" stroke="currentColor" stroke-width="19" stroke-linecap="round" fill="none"/></svg>.56</div>
<div class="t" id="t114" style="left:2150.90px;top:677.48px;font-size:22.5px;color:#151515;transform:scaleX(1.0435);">3</div>
<div class="t" id="t115" style="left:2345.89px;top:677.48px;font-size:22.5px;color:#151515;transform:scaleX(1.0435);">3</div>
<div class="t" id="t116" style="left:1760.93px;top:712.77px;font-size:22.5px;color:#151515;transform:scaleX(1.1710);"><svg class="one" viewBox="0 0 78 160" preserveAspectRatio="none"><path d="M47 2 H68 V152 Q68 160 57.5 160 Q47 160 47 152 Z" fill="currentColor"/><path d="M60 9 L14 37" stroke="currentColor" stroke-width="19" stroke-linecap="round" fill="none"/></svg></div>
<div class="t" id="t117" style="left:1956.00px;top:712.77px;font-size:22.5px;color:#151515;transform:scaleX(1.0344);"><svg class="one" viewBox="0 0 78 160" preserveAspectRatio="none"><path d="M47 2 H68 V152 Q68 160 57.5 160 Q47 160 47 152 Z" fill="currentColor"/><path d="M60 9 L14 37" stroke="currentColor" stroke-width="19" stroke-linecap="round" fill="none"/></svg>.56</div>
<div class="t" id="t118" style="left:2150.90px;top:712.77px;font-size:22.5px;color:#151515;transform:scaleX(1.0435);">3</div>
<div class="t" id="t119" style="left:2345.89px;top:712.77px;font-size:22.5px;color:#151515;transform:scaleX(1.0435);">3</div>
<div class="t" id="t120" style="left:1424.02px;top:778.55px;font-size:17px;color:#555;transform:scaleX(0.9500);">3</div>
<div class="t" id="t121" style="left:1425.02px;top:851.55px;font-size:17px;color:#555;transform:scaleX(0.9500);">2</div>
<div class="t" id="t122" style="left:1428.40px;top:924.45px;font-size:17px;color:#555;transform:scaleX(0.9500);"><svg class="one" viewBox="0 0 78 160" preserveAspectRatio="none"><path d="M47 2 H68 V152 Q68 160 57.5 160 Q47 160 47 152 Z" fill="currentColor"/><path d="M60 9 L14 37" stroke="currentColor" stroke-width="19" stroke-linecap="round" fill="none"/></svg></div>
<div class="t" id="t123" style="left:1424.52px;top:997.55px;font-size:17px;color:#555;transform:scaleX(0.9500);">0</div>
<div class="t" id="t124" style="left:1513.47px;top:1016.15px;font-size:17px;color:#555;transform:scaleX(0.9906);">03:32 PM</div>
<div class="t" id="t125" style="left:1641.47px;top:1016.15px;font-size:17px;color:#555;transform:scaleX(0.9906);">03:35 PM</div>
<div class="t" id="t126" style="left:1769.47px;top:1016.15px;font-size:17px;color:#555;transform:scaleX(0.9906);">03:38 PM</div>
<div class="t" id="t127" style="left:1897.95px;top:1016.15px;font-size:17px;color:#555;transform:scaleX(1.0562);">03:4<svg class="one" viewBox="0 0 78 160" preserveAspectRatio="none"><path d="M47 2 H68 V152 Q68 160 57.5 160 Q47 160 47 152 Z" fill="currentColor"/><path d="M60 9 L14 37" stroke="currentColor" stroke-width="19" stroke-linecap="round" fill="none"/></svg> PM</div>
<div class="t" id="t128" style="left:2025.47px;top:1016.15px;font-size:17px;color:#555;transform:scaleX(0.9906);">03:44 PM</div>
<div class="t" id="t129" style="left:2153.47px;top:1016.15px;font-size:17px;color:#555;transform:scaleX(0.9906);">03:47 PM</div>
<div class="t" id="t130" style="left:2281.47px;top:1016.15px;font-size:17px;color:#555;transform:scaleX(0.9906);">03:50 PM</div>
<div class="t" id="t131" style="left:2409.47px;top:1016.15px;font-size:17px;color:#555;transform:scaleX(0.9906);">03:53 PM</div>
<div class="t" id="t132" style="left:2537.47px;top:1016.15px;font-size:17px;color:#555;transform:scaleX(0.9906);">03:56 PM</div>
<div class="t" id="t133" style="left:2027.00px;top:1056.47px;font-size:16.5px;color:#555;transform:scaleX(0.9300);">500</div>
<div class="t" id="t134" style="left:2081.00px;top:1056.47px;font-size:16.5px;color:#555;transform:scaleX(0.9307);">All</div>
</body></html>
